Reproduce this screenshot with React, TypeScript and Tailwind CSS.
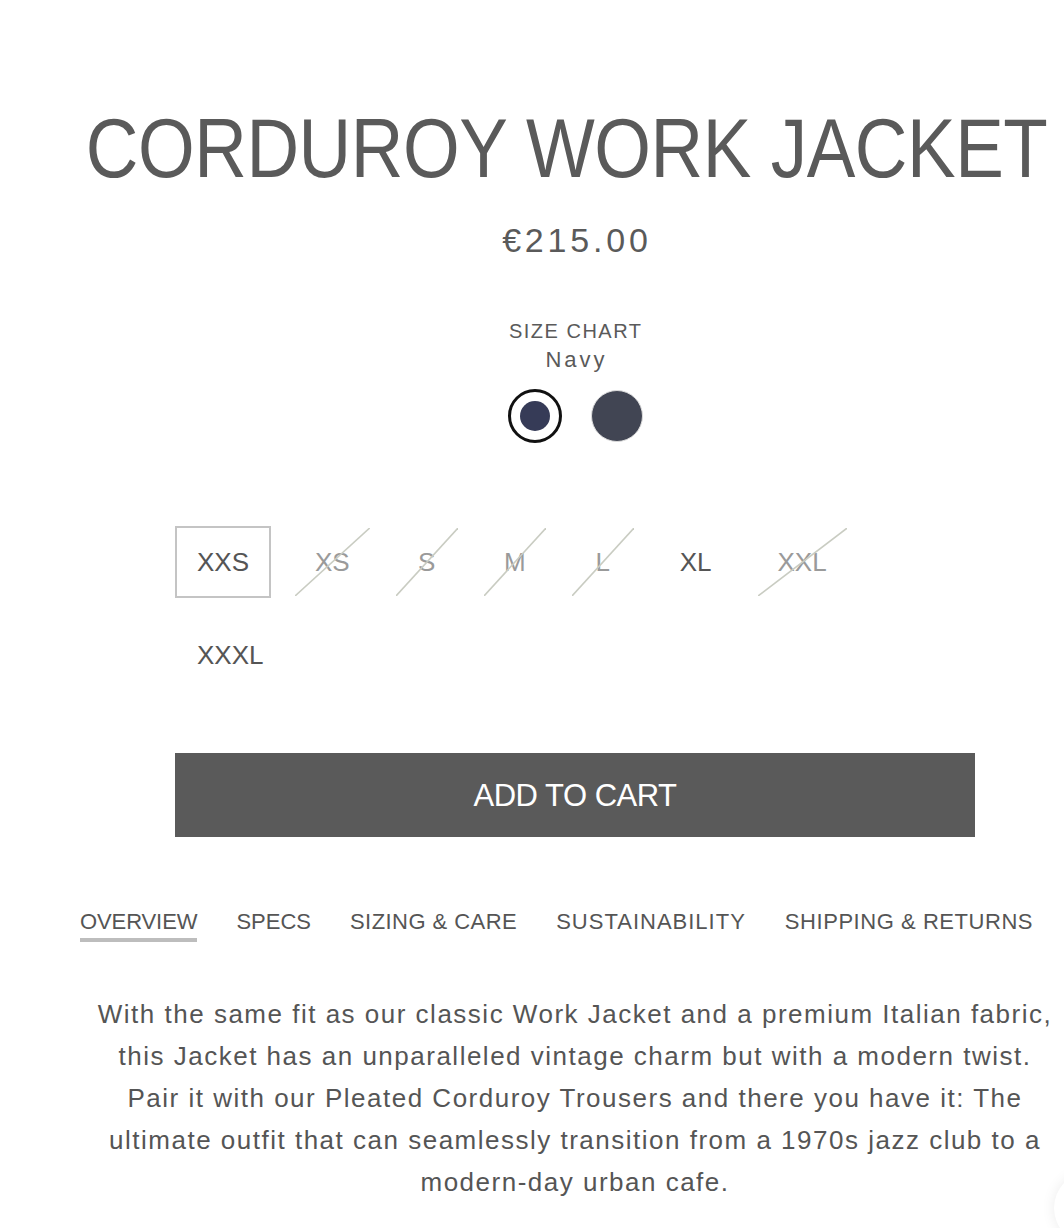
import React from "react";

const sizes: { label: string; available: boolean; selected?: boolean }[] = [
  { label: "XXS", available: true, selected: true },
  { label: "XS", available: false },
  { label: "S", available: false },
  { label: "M", available: false },
  { label: "L", available: false },
  { label: "XL", available: true },
  { label: "XXL", available: false },
  { label: "XXXL", available: true },
];

const tabs: { label: string; tracking: string }[] = [
  { label: "OVERVIEW", tracking: "tracking-[-0.1px]" },
  { label: "SPECS", tracking: "tracking-[0px]" },
  { label: "SIZING & CARE", tracking: "tracking-[0.45px]" },
  { label: "SUSTAINABILITY", tracking: "tracking-[1px]" },
  { label: "SHIPPING & RETURNS", tracking: "tracking-[0.55px]" },
];

export default function App() {
  return (
    <div
      className="relative w-[1064px] h-[1228px] overflow-hidden bg-white text-[#5a5a5a]"
      style={{ fontFamily: '"Liberation Sans", Arial, sans-serif' }}
    >
      {/* Title */}
      <div className="ml-[70px] w-[994px] pt-[107px] flex justify-center">
        <h1 className="shrink-0 whitespace-nowrap text-[83px] leading-none font-normal tracking-[-0.5px] scale-x-[0.878] text-[#5a5a5a]">
          CORDUROY WORK JACKET
        </h1>
      </div>

      {/* Center column */}
      <div className="ml-[175px] w-[800px] flex flex-col items-center">
        <div className="mt-[33px] text-[34px] leading-none tracking-[3.8px] pl-[3.8px]">€215.00</div>
        <div className="mt-[64px] text-[20px] leading-none tracking-[1.5px] pl-[1.5px]">SIZE CHART</div>
        <div className="mt-[8px] text-[22px] leading-none tracking-[3px] pl-[3px]">Navy</div>
        <div className="mt-[18px] flex items-center gap-[29px]">
          <button className="w-[54px] h-[54px] rounded-full border-[3px] border-[#111] bg-white flex items-center justify-center">
            <span className="block w-[30px] h-[30px] rounded-full bg-[#363b57]" />
          </button>
          <button className="w-[52px] h-[52px] rounded-full border-[1.5px] border-[#dcdcdc] bg-[#414553]" />
        </div>
      </div>

      {/* Sizes */}
      <div className="ml-[175px] w-[800px] mt-[83px] flex flex-wrap gap-x-[22px] gap-y-[21px]">
        {sizes.map((s) => (
          <div
            key={s.label}
            className={
              "relative h-[72px] min-w-[66px] px-5 flex items-center justify-center text-[26px] leading-none " +
              (s.selected ? "border-2 border-[#c4c4c4] " : "border-2 border-transparent ") +
              (s.available ? "text-[#555]" : "text-[#9a9a9a]")
            }
          >
            {s.label}
            {!s.available && (
              <svg
                className="absolute inset-0 w-full h-full"
                viewBox="0 0 100 100"
                preserveAspectRatio="none"
              >
                <line
                  x1="0"
                  y1="100"
                  x2="100"
                  y2="0"
                  stroke="#c9ccc2"
                  strokeWidth="1.6"
                  vectorEffect="non-scaling-stroke"
                />
              </svg>
            )}
          </div>
        ))}
      </div>

      {/* Add to cart */}
      <div className="ml-[175px] w-[800px] mt-[62px]">
        <button className="w-full h-[84px] bg-[#5a5a5a] text-white text-[31px] leading-none tracking-[-0.5px]">
          ADD TO CART
        </button>
      </div>

      {/* Tabs */}
      <div className="ml-[80px] mt-[74px] flex gap-[39px] text-[22px] leading-none text-[#555]">
        {tabs.map((t, i) => (
          <div
            key={t.label}
            className={
              "pb-[5px] border-b-4 whitespace-nowrap " +
              t.tracking +
              " " +
              (i === 0 ? "border-[#bdbdbd]" : "border-transparent")
            }
          >
            {t.label}
          </div>
        ))}
      </div>

      {/* Description */}
      <div className="ml-[90px] w-[970px] mt-[51px] text-center text-[26px] leading-[42px] tracking-[1.5px] text-[#555]">
        With the same fit as our classic Work Jacket and a premium Italian fabric, this Jacket has an
        unparalleled vintage charm but with a modern twist. Pair it with our Pleated Corduroy Trousers and
        there you have it: The ultimate outfit that can seamlessly transition from a 1970s jazz club to a
        modern-day urban cafe.
      </div>

      {/* Floating button edge */}
      <div className="absolute left-[1054px] top-[1172px] w-[72px] h-[72px] rounded-full bg-white shadow-[0_0_14px_rgba(0,0,0,0.08)]" />
    </div>
  );
}
